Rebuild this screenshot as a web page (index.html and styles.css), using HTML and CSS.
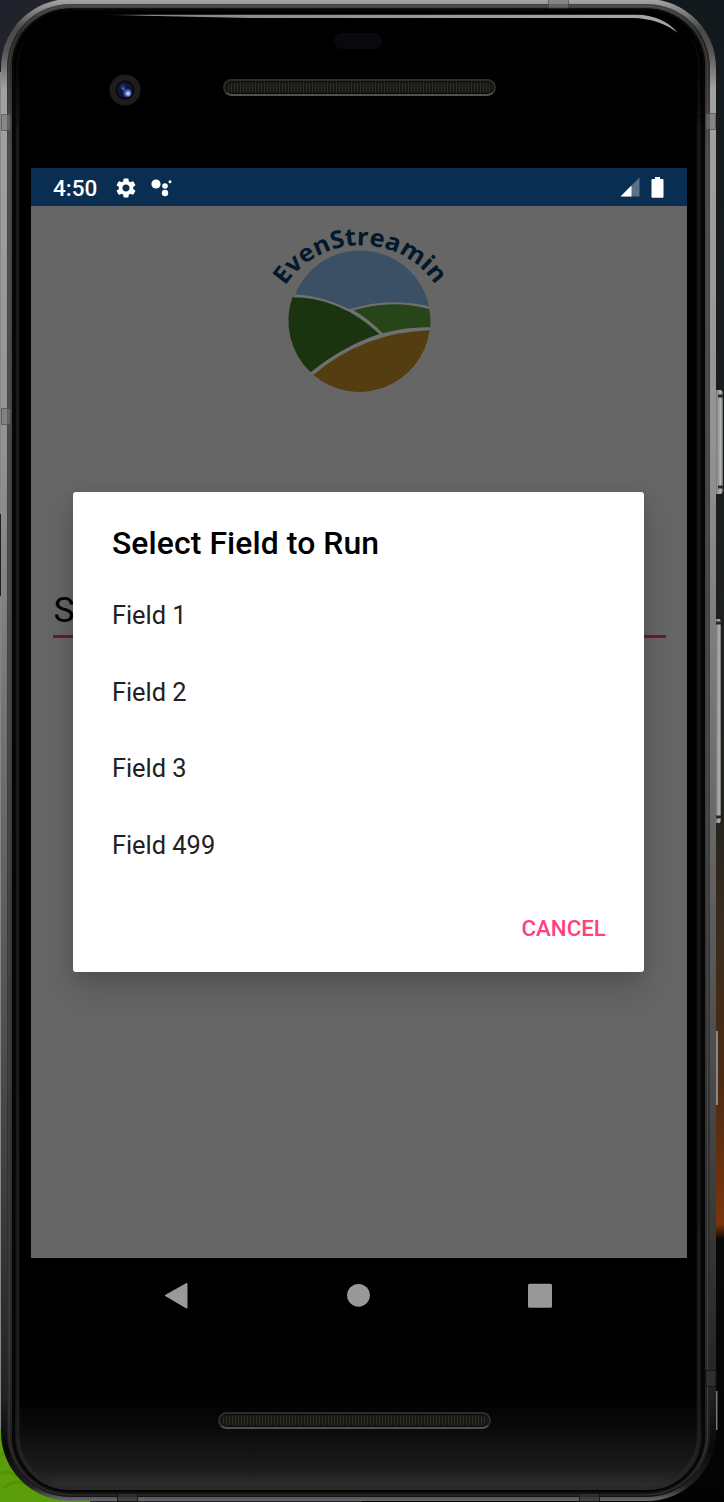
FILE: index.html
```html
<!DOCTYPE html>
<html lang="en">
<head>
<meta charset="utf-8">
<title>EvenStreamin</title>
<link rel="stylesheet" href="styles.css">
</head>
<body>
<div class="stage">
  <svg class="shell" viewBox="0 0 724 1502" width="724" height="1502" aria-hidden="true">
    <defs>
      <linearGradient id="rail" x1="0" y1="0" x2="0" y2="1">
        <stop offset="0" stop-color="#a8a8a8"/><stop offset=".02" stop-color="#484848"/><stop offset=".035" stop-color="#555"/><stop offset=".06" stop-color="#a2a2a2"/>
        <stop offset=".3" stop-color="#929292"/><stop offset=".5" stop-color="#707070"/>
        <stop offset=".8" stop-color="#3c3c3c"/><stop offset=".93" stop-color="#222"/><stop offset=".965" stop-color="#080808"/><stop offset=".99" stop-color="#222"/><stop offset="1" stop-color="#68686a"/>
      </linearGradient>
      <linearGradient id="railInner" x1="0" y1="0" x2="0" y2="1">
        <stop offset="0" stop-color="#454545"/><stop offset=".02" stop-color="#222"/><stop offset=".1" stop-color="#484848"/><stop offset=".5" stop-color="#404040"/><stop offset=".9" stop-color="#2b2b2b"/><stop offset="1" stop-color="#161616"/>
      </linearGradient>
      <linearGradient id="wall" x1="0" y1="0" x2="0" y2="1">
        <stop offset="0" stop-color="#12191d"/><stop offset=".53" stop-color="#20201d"/><stop offset=".62" stop-color="#3a2c1e"/>
        <stop offset=".72" stop-color="#4c2a12"/><stop offset=".815" stop-color="#7a350c"/><stop offset=".825" stop-color="#080808"/><stop offset="1" stop-color="#030303"/>
      </linearGradient>
      <linearGradient id="chin" x1="0" y1="0" x2="0" y2="1">
        <stop offset="0" stop-color="#000"/><stop offset=".3" stop-color="#080808"/><stop offset=".75" stop-color="#1b1b1b"/><stop offset=".93" stop-color="#2f2f2f"/><stop offset="1" stop-color="#202020"/>
      </linearGradient>
      <linearGradient id="sheen" x1="0" y1="0" x2="0" y2="1">
        <stop offset="0" stop-color="#202020" stop-opacity="0"/><stop offset=".04" stop-color="#202020" stop-opacity=".3"/><stop offset=".08" stop-color="#202020"/><stop offset="1" stop-color="#262626"/>
      </linearGradient>
      <linearGradient id="gleam" x1="0" y1="0" x2="1" y2="0">
        <stop offset="0" stop-color="#8d9094" stop-opacity="0"/><stop offset=".08" stop-color="#85888c"/><stop offset="1" stop-color="#a4a8ab"/>
      </linearGradient>
      <linearGradient id="key" x1="0" y1="0" x2="1" y2="0">
        <stop offset="0" stop-color="#777"/><stop offset=".65" stop-color="#b5b5b5"/><stop offset="1" stop-color="#666"/>
      </linearGradient>
      <filter id="soft" x="-5%" y="-5%" width="110%" height="110%"><feGaussianBlur stdDeviation="1.3"/></filter>
      <clipPath id="glass"><rect x="12" y="8.500" width="693" height="1484" rx="58"/></clipPath>
    </defs>
    <rect width="362" height="1502" fill="#20232b"/>
    <rect x="362" width="362" height="1502" fill="url(#wall)"/>
    <rect y="72" width="2" height="1357" fill="#858888"/>
    <rect y="514" width="2" height="82" fill="#222"/>
    <rect y="1429" width="90" height="73" fill="#5b9e09"/>
    <path d="M0 1455q10-4 18 5M3 1488q17-12 31 0M0 1474q8-5 17 2" fill="none" stroke="#529404" stroke-width="3"/>
    <g>
      <path d="M716 390h4q3 0 3 4v96q0 4-3 4h-4z" fill="url(#key)"/>
      <path d="M718 396h5M718 487h5" stroke="#282828" stroke-width="3"/>
      <path d="M716 619h3q2 0 2 4v196q0 4-2 4h-3z" fill="url(#key)"/>
      <path d="M716 623h5M716 817h5" stroke="#282828" stroke-width="3"/>
      <rect x="716" y="1031" width="2" height="74" fill="#888"/>
      <rect x="716" y="1391" width="1.500" height="39" fill="#777"/>
    </g>
    <rect x="1" y="-1" width="715" height="1502" rx="69" fill="url(#rail)"/>
    <rect x="7" y="4" width="703" height="1493" rx="63" fill="url(#railInner)"/>
    <rect x="9" y="6" width="698.500" height="1489" rx="61" fill="none" stroke="#777" stroke-opacity=".3"/>
    <g clip-path="url(#glass)">
      <rect x="12" y="8" width="693" height="1486" fill="#000"/>
      <rect x="12" y="1392" width="693" height="102" fill="url(#chin)"/>
      <rect x="17.500" y="12" width="681.500" height="1477" rx="55" fill="none" stroke="url(#sheen)" stroke-width="3" filter="url(#soft)"/>
      <rect x="12" y="8.500" width="693" height="1484" rx="58" fill="none" stroke="#060606" stroke-width="5"/>
    </g>
    <path d="M97 14.700H636Q663 15 678 33Q659 18.500 633 18H250Z" fill="url(#gleam)"/>
    <g fill="#777" stroke="#444">
      <path d="M1.500 114.500h9v16h-9zM1.500 408.500h9v16h-9zM706 113.500h9.500v16h-9.500zM548.500-1h20v9h-20z" fill-opacity=".6" stroke-opacity=".6"/>
      <path d="M706 1370.500h10v16h-10zM117.500 1493.500h20v8h-20zM579.500 1493.500h20v8h-20z" fill="#333" fill-opacity=".7" stroke="#161616"/>
    </g>
  </svg>

  <main class="phone">
    <header class="bezel-top">
      <div class="sensor"></div>
      <div class="front">
        <svg class="camera" viewBox="0 0 32 32" aria-hidden="true">
          <circle cx="16" cy="16" r="15.500" fill="#1e1c1d"/><circle cx="16" cy="16" r="9.500" fill="#070709"/>
          <circle cx="16" cy="16" r="8" fill="#0d1434"/><path d="M11 12q3-4 6 0l-1 6q-4-1-5-6" fill="#1c2c68"/>
          <circle cx="18.500" cy="19" r="4" fill="#4053a5"/><circle cx="19" cy="19.500" r="2.300" fill="#aebcf5"/><circle cx="14" cy="14.500" r="1.200" fill="#5570c8"/>
        </svg>
        <div class="speaker"></div>
      </div>
    </header>

    <section class="screen">
      <div class="status">
        <span class="time">4:50</span>
        <svg class="gear" viewBox="2 2 20 20" aria-hidden="true"><path fill="#fff" d="M19.140 12.940c.04-.3.060-.61.060-.94 0-.32-.02-.64-.07-.94l2.030-1.580c.18-.14.230-.41.120-.61l-1.920-3.320c-.12-.22-.37-.29-.59-.22l-2.390.96c-.5-.38-1.030-.7-1.620-.94l-.36-2.540c-.04-.24-.24-.41-.48-.41h-3.840c-.24 0-.43.170-.47.410l-.36 2.540c-.59.240-1.130.570-1.620.940l-2.390-.96c-.22-.08-.47 0-.59.220L2.740 8.870c-.12.210-.08.470.12.610l2.030 1.580c-.05.300-.09.630-.09.940s.02.640.07.940l-2.030 1.580c-.18.140-.23.410-.12.610l1.920 3.320c.12.220.370.290.590.220l2.390-.96c.5.380 1.030.700 1.620.940l.36 2.540c.05.240.240.410.480.410h3.840c.24 0 .44-.17.470-.41l.36-2.540c.59-.24 1.130-.56 1.620-.94l2.390.96c.22.080.470 0 .59-.22l1.920-3.320c.12-.22.070-.47-.12-.61zM12 15.600c-1.980 0-3.600-1.620-3.600-3.600s1.620-3.600 3.600-3.600 3.600 1.620 3.600 3.600-1.620 3.600-3.600 3.600z"/></svg>
        <svg class="assistant" viewBox="0 0 21 18" aria-hidden="true"><g fill="#fff"><circle cx="5" cy="5" r="4.600"/><circle cx="14" cy="7" r="2.800"/><circle cx="14" cy="14" r="3.200"/><circle cx="19" cy="2.700" r="1.500"/></g></svg>
        <svg class="signal" viewBox="0 0 20 20" aria-hidden="true"><path d="M19.500.5v19H.5z" fill="#fff" fill-opacity=".32"/><path d="M11.500 8.500v11H.5z" fill="#fff"/></svg>
        <svg class="battery" viewBox="0 0 13 21" aria-hidden="true"><path d="M4 0h5v2h2.500q1 0 1 1v16.800q0 1-1 1h-10q-1 0-1-1V3q0-1 1-1H4z" fill="#fff"/></svg>
      </div>
      <div class="app">
        <svg class="logo" viewBox="0 0 600 570" role="img" aria-label="EvenStreamin">
          <defs><path id="arc" d="M75 213A271 271 0 0 1 528 213"/></defs>
          <circle cx="299" cy="320" r="212" fill="#707070"/>
          <path fill="#3b4f65" d="M105 238A211 211 0 0 1 507 274Q385 245 268 283Q190 243 105 238Z"/>
          <path fill="#1a3410" d="M97 247Q240 247 358 357Q250 393 152 472A213 213 0 0 1 97 247Z"/>
          <path fill="#264518" d="M281 286Q395 252 508 282Q513 310 511 337Q440 335 368 355Q330 315 281 286Z"/>
          <path fill="#543d10" d="M160 480Q310 352 509 346A213 213 0 0 1 160 480Z"/>
          <text class="brand"><textPath href="#arc" textLength="532" lengthAdjust="spacingAndGlyphs">EvenStreamin</textPath></text>
        </svg>
        <div class="picker">S</div>
        <section class="dialog" role="dialog">
          <h1 class="title">Select Field to Run</h1>
          <ul class="fields">
            <li>Field 1</li><li>Field 2</li><li>Field 3</li><li>Field 499</li>
          </ul>
          <div class="actions"><button class="cancel">CANCEL</button></div>
        </section>
      </div>
    </section>

    <nav class="nav">
      <svg viewBox="0 0 26 28"><path d="M3 13.500L23.500 2v23.500z" fill="#999" stroke="#999" stroke-width="2" stroke-linejoin="round"/></svg>
      <svg viewBox="0 0 26 28"><circle cx="13.500" cy="13.300" r="11.400" fill="#999"/></svg>
      <svg viewBox="0 0 26 28"><rect x="1" y="1.700" width="24" height="24" rx="1.500" fill="#999"/></svg>
    </nav>
    <div class="speaker speaker-bottom"></div>
  </main>
</div>
</body>
</html>
```
FILE: styles.css
```css
* { box-sizing: border-box; }
body { margin: 0; background: #000; font-family: Roboto, "Liberation Sans", sans-serif; }
.stage { position: relative; width: 724px; height: 1502px; overflow: hidden; }
.shell { position: absolute; inset: 0; display: block; }
.phone { position: relative; width: 656px; margin-left: 31px; display: flex; flex-direction: column; }
.bezel-top { height: 168px; padding-top: 33px; }
.sensor { width: 48px; height: 16px; margin-left: 303px; border-radius: 8px; background: #08090d; }
.front { display: flex; align-items: flex-start; padding: 25px 0 0 78px; }
.camera { width: 32px; height: 32px; }
.speaker {
  width: 273px; height: 17px; margin: 5px 0 0 82px;
  border: 2px solid #2c2c2c; border-bottom-color: #505050; border-radius: 9px;
  background: repeating-linear-gradient(90deg, #302d27 0 1px, #191813 1px 3px);
  box-shadow: inset 0 0 2px 1px #080808;
}
.screen { height: 1089.500px; display: flex; flex-direction: column; background: #666; overflow: hidden; }
.status { height: 38px; flex: none; display: flex; align-items: center; padding: 0 23px 0 22px; background: #0a2e52; color: #fff; }
.time { font-size: 22.500px; font-weight: 500; line-height: 38px; width: 63px; padding-top: 2px; }
.gear { width: 20px; height: 20px; margin-top: 1px; }
.assistant { width: 21px; height: 18px; margin: 1px 0 0 15px; }
.signal { width: 20px; height: 20px; margin-left: auto; margin-right: 11px; }
.battery { width: 13px; height: 21px; }
.app { flex: 1; display: flex; flex-direction: column; }
.logo { width: 200px; height: 190px; margin: 9px 0 0 229px; flex: none; }
.brand { font-family: "Open Sans", sans-serif; font-weight: 700; font-size: 73px; fill: #02192c; }
.picker { height: 54px; flex: none; margin: 179px 21px 0 22px; padding-left: .5px; border-bottom: 3px solid #661a33; font-size: 35.500px; line-height: 52px; color: #000; }
.dialog {
  position: relative; width: 571px; height: 480px; flex: none; margin: -146px 0 0 42.400px; padding: 28px 38.500px 0;
  border-radius: 3px; background: #fff;
  box-shadow: 0 18px 36px rgba(0,0,0,.17), 0 4px 14px rgba(0,0,0,.1);
}
.title { margin: 0; font-size: 31.900px; letter-spacing: .1px; line-height: 46px; font-weight: 500; color: #000; }
.fields { list-style: none; margin: 10px 0 0; padding: 0; font-size: 25.400px; color: #212121; }
.fields li { height: 76.500px; line-height: 78px; }
.actions { display: flex; justify-content: flex-end; padding-top: 24px; }
.cancel { border: 0; padding: 0; background: none; color: #ff4081; font: 500 22.300px/44px Roboto, sans-serif; }
.nav { height: 74px; display: flex; justify-content: space-between; align-items: center; padding: 2px 134px 0 132px; }
.nav svg { width: 26px; height: 28px; }
.speaker-bottom { margin: 80px 0 0 187px; }
```
